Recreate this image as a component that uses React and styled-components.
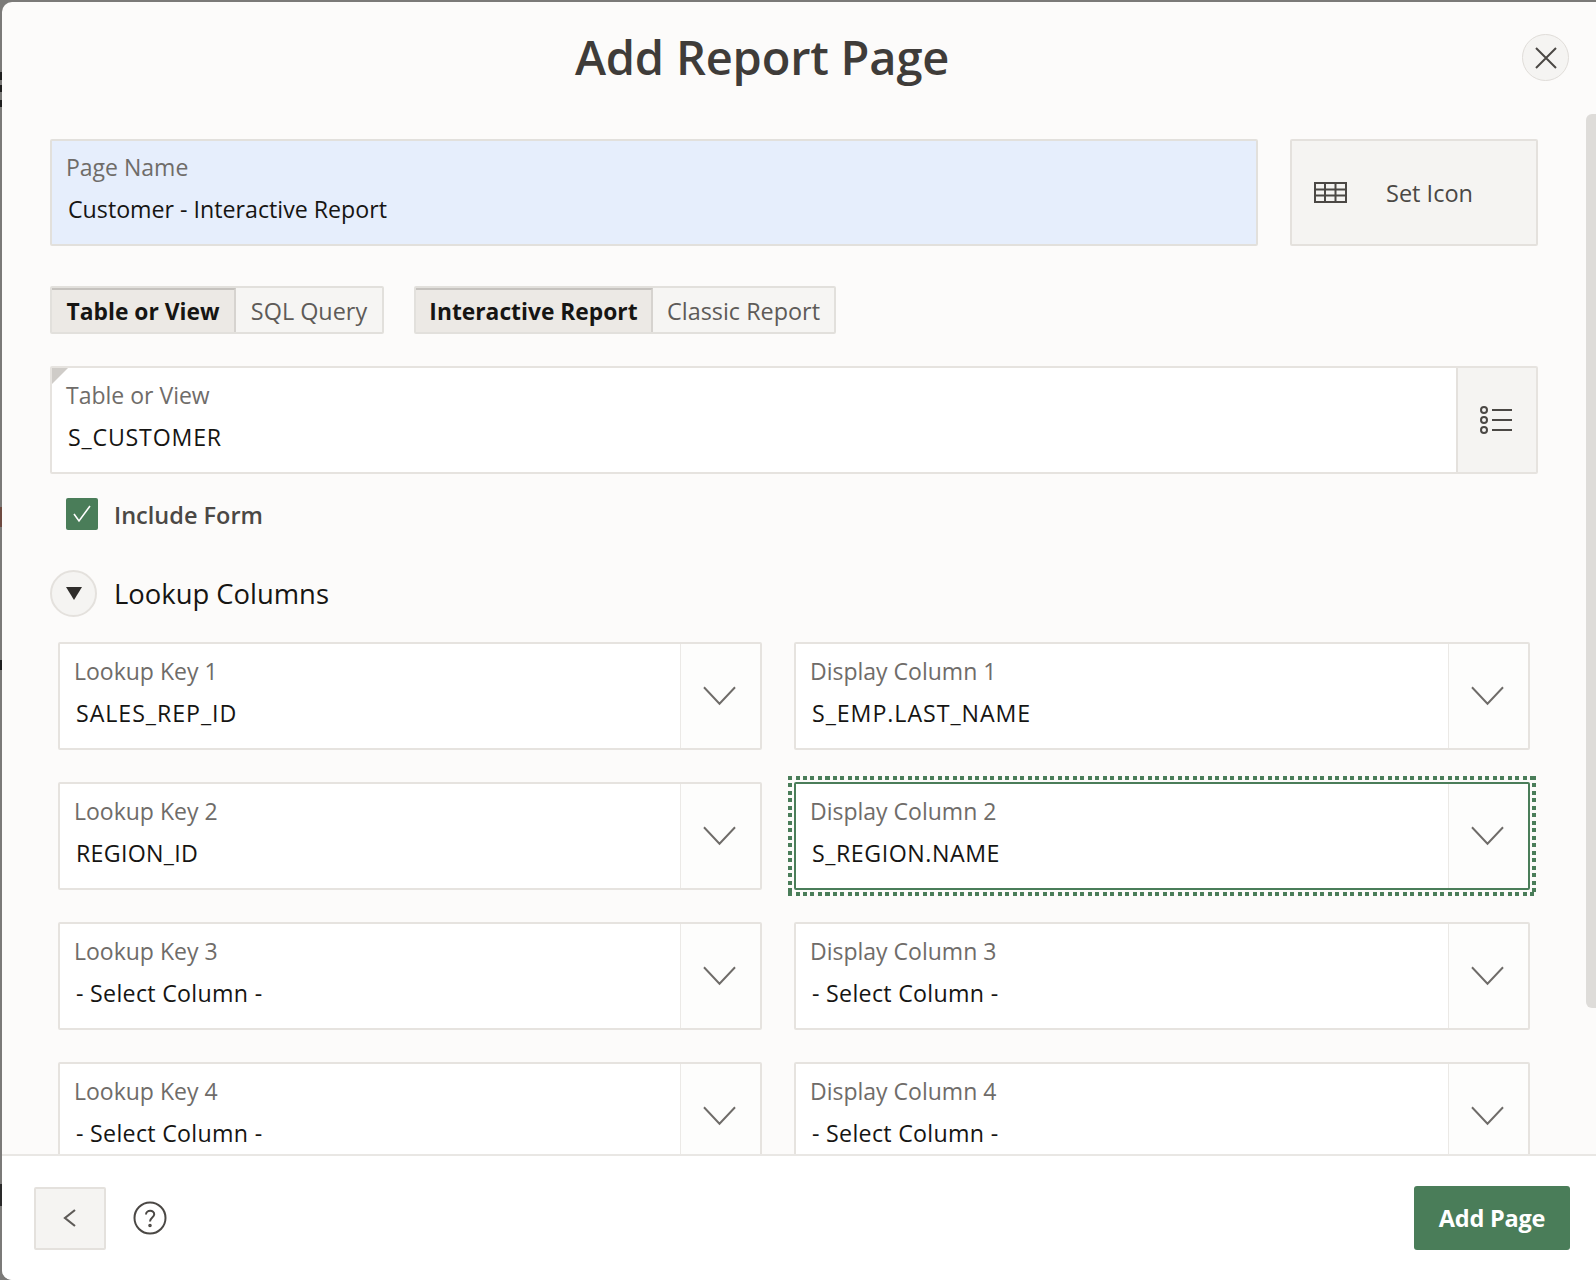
import React from 'react';
import styled, { createGlobalStyle } from 'styled-components';

const Global = createGlobalStyle`
  html, body { margin: 0; padding: 0; }
  body {
    font-family: "Open Sans", "Noto Sans", sans-serif;
    color: #161513;
    background: linear-gradient(180deg,
      #7b7a78 0 72px, #1f1f1f 72px 80px, #7b7a78 80px 85px, #1f1f1f 85px 92px, #7b7a78 92px 100px, #1f1f1f 100px 107px,
      #7b7a78 107px 507px, #6e4a40 507px 527px, #7b7a78 527px 660px, #1f1f1f 660px 670px,
      #7b7a78 670px 1184px, #2a2a2a 1184px 1206px, #7b7a78 1206px);
  }
  * { box-sizing: border-box; }
`;
const Dialog = styled.div`
  position: relative;
  margin: 2px 0 0 2px;
  height: 1278px;
  width: 1594px;
  background: #fcfbfa;
  border-radius: 10px 0 0 10px;
  overflow: hidden;
  display: flex;
  flex-direction: column;
`;
const Header = styled.header`
  height: 110px;
  flex: none;
  display: flex;
  align-items: center;
  justify-content: center;
  position: relative;
  padding-right: 74px;
`;
const Title = styled.h1`
  margin: 0;
  font-size: 47px;
  font-weight: 600;
  color: #3f3c39;
  letter-spacing: -0.2px;
`;
const CloseButton = styled.button`
  position: absolute;
  left: 1520px;
  top: 32px;
  width: 47px;
  height: 47px;
  border-radius: 50%;
  border: 1px solid #dfdcd8;
  background: #f5f4f2;
  color: #4b4845;
  display: flex;
  align-items: center;
  justify-content: center;
  padding: 0;
`;
const Scrollbar = styled.div`
  position: absolute;
  left: 1584px;
  top: 112px;
  width: 10px;
  height: 894px;
  background: #dedcd9;
  border-radius: 6px 0 0 6px;
`;
const Body = styled.main`
  flex: 1;
  overflow: hidden;
  padding: 27px 0 0 48px;
`;
const TopRow = styled.div`
  display: flex;
  gap: 32px;
  width: 1488px;
`;
const PageName = styled.div`
  flex: 1;
  height: 107px;
  background: #e6eefc;
  border: 2px solid #e2e0dc;
  border-radius: 2px;
  padding: 11px 0 0 14px;
`;
const Label = styled.div`
  font-size: 23px;
  line-height: 30px;
  color: #6f6c69;
`;
const Value = styled.div`
  font-size: 23.2px;
  line-height: 32px;
  color: #161513;
  margin: 11px 0 0 2px;
  letter-spacing: ${p => p.$ls || 0}px;
`;
const SetIcon = styled.button`
  width: 248px;
  height: 107px;
  flex: none;
  background: #f5f4f2;
  border: 2px solid #e4e1dd;
  border-radius: 2px;
  display: flex;
  align-items: center;
  padding: 0 0 0 22px;
  gap: 39px;
  font-family: inherit;
  font-size: 23.5px;
  color: #4b4845;
`;
const ToggleRow = styled.div`
  display: flex;
  gap: 30px;
  margin-top: 40px;
`;
const ToggleGroup = styled.div`
  display: flex;
  height: 48px;
  border: 2px solid #e2e0dc;
  border-radius: 2px;
  background: #f6f5f3;
`;
const Toggle = styled.div`
  width: ${p => p.$w}px;
  display: flex;
  align-items: center;
  justify-content: center;
  font-size: ${p => (p.$active ? 22.8 : 23.4)}px;
  font-weight: ${p => (p.$active ? 700 : 400)};
  color: ${p => (p.$active ? '#161513' : '#5e5b58')};
  background: ${p => (p.$active ? '#ece9e5' : 'transparent')};
  border-right: ${p => (p.$active ? '2px solid #d6d3cf' : 'none')};
  border-top: ${p => (p.$active ? '2px solid #c5c2be' : 'none')};
  padding-top: 1px;
`;
const LovField = styled.div`
  margin-top: 32px;
  width: 1488px;
  height: 108px;
  display: flex;
  background: #fff;
  border: 2px solid #e6e3df;
  border-radius: 2px;
  position: relative;
`;
const Corner = styled.span`
  position: absolute;
  left: 0;
  top: 0;
  width: 0;
  height: 0;
  border-style: solid;
  border-width: 16px 16px 0 0;
  border-color: #cfccc8 transparent transparent transparent;
`;
const FieldMain = styled.div`
  flex: 1;
  padding: 12px 0 0 14px;
`;
const LovButton = styled.div`
  width: 80px;
  background: #f5f4f2;
  border-left: 2px solid #e4e1dd;
  display: flex;
  align-items: center;
  justify-content: center;
  color: #4b4845;
  padding-right: 2px;
`;
const CheckRow = styled.div`
  display: flex;
  align-items: center;
  gap: 16px;
  margin: 23px 0 0 16px;
`;
const Check = styled.div`
  width: 32px;
  height: 32px;
  border-radius: 2px;
  background: #4a7d59;
  display: flex;
  align-items: center;
  justify-content: center;
`;
const CheckLabel = styled.span`
  font-size: 23.5px;
  font-weight: 600;
  color: #4b4845;
  padding-top: 2px;
`;
const SectionRow = styled.div`
  display: flex;
  align-items: center;
  gap: 17px;
  margin-top: 39px;
`;
const SectionToggle = styled.div`
  width: 47px;
  height: 47px;
  border-radius: 50%;
  border: 2px solid #e4e1dd;
  background: #f5f4f2;
  display: flex;
  align-items: center;
  justify-content: center;
`;
const SectionTitle = styled.h2`
  margin: 0;
  font-size: 27.4px;
  font-weight: 400;
  color: #161513;
`;
const FieldGrid = styled.div`
  display: grid;
  grid-template-columns: 704px 736px;
  column-gap: 32px;
  row-gap: 32px;
  margin: 25px 0 0 8px;
`;
const SelectField = styled.div`
  position: relative;
  height: 108px;
  display: flex;
  background: #fff;
  border: 2px solid ${p => (p.$focus ? '#4a7d59' : '#e6e3df')};
  border-radius: 2px;
`;
const FocusRing = styled.span`
  position: absolute;
  inset: -8px;
  pointer-events: none;
  background:
    repeating-linear-gradient(90deg, #4a7d59 0 4px, transparent 4px 7.5px) top / 100% 4px no-repeat,
    repeating-linear-gradient(90deg, #4a7d59 0 4px, transparent 4px 7.5px) bottom / 100% 4px no-repeat,
    repeating-linear-gradient(180deg, #4a7d59 0 4px, transparent 4px 7.5px) left / 4px 100% no-repeat,
    repeating-linear-gradient(180deg, #4a7d59 0 4px, transparent 4px 7.5px) right / 4px 100% no-repeat;
`;
const SelectMain = styled.div`
  flex: 1;
  padding: 12px 0 0 14px;
`;
const SelectArrow = styled.div`
  width: 80px;
  background: #fdfdfc;
  border-left: 1px solid #ebe9e6;
  display: flex;
  align-items: center;
  justify-content: center;
  color: #6f6c69;
  padding-right: 2px;
`;
const Footer = styled.footer`
  flex: none;
  height: 126px;
  background: #fff;
  border-top: 2px solid #e9e7e4;
  display: flex;
  align-items: center;
  padding: 0 26px 0 32px;
`;
const BackButton = styled.button`
  width: 72px;
  height: 63px;
  background: #f5f4f2;
  border: 2px solid #e4e1dd;
  border-radius: 2px;
  color: #5e5b58;
  display: flex;
  align-items: center;
  justify-content: center;
  padding: 0 3px 0 0;
`;
const HelpIcon = styled.div`
  margin-left: 27px;
  display: flex;
  color: #4b4845;
`;
const AddButton = styled.button`
  margin-left: auto;
  width: 156px;
  height: 64px;
  background: #4a7d59;
  border: none;
  border-radius: 3px;
  color: #fff;
  font-family: inherit;
  font-size: 23.5px;
  font-weight: 700;
  letter-spacing: -0.2px;
`;

const Chevron = () => (
  <svg width="33" height="22" viewBox="0 0 34 22" fill="none" stroke="currentColor" strokeWidth="2">
    <path d="M1 2 L17 19 L33 2" />
  </svg>
);

const fields = [
  ['Lookup Key 1', 'SALES_REP_ID', 0.95],
  ['Display Column 1', 'S_EMP.LAST_NAME', 0.95],
  ['Lookup Key 2', 'REGION_ID', 0.3],
  ['Display Column 2', 'S_REGION.NAME', 0.55, true],
  ['Lookup Key 3', '- Select Column -', 0.3],
  ['Display Column 3', '- Select Column -', 0.3],
  ['Lookup Key 4', '- Select Column -', 0.3],
  ['Display Column 4', '- Select Column -', 0.3],
];

export default function App() {
  return (
    <>
      <Global />
      <Dialog>
        <Header>
          <Title>Add Report Page</Title>
          <CloseButton aria-label="Close">
            <svg width="24" height="24" viewBox="0 0 24 24" fill="none" stroke="currentColor" strokeWidth="2">
              <path d="M2 2 L22 22 M22 2 L2 22" />
            </svg>
          </CloseButton>
        </Header>
        <Scrollbar />
        <Body>
          <TopRow>
            <PageName>
              <Label>Page Name</Label>
              <Value>Customer - Interactive Report</Value>
            </PageName>
            <SetIcon>
              <svg width="33" height="21" viewBox="0 0 33 21" fill="none" stroke="currentColor" strokeWidth="2">
                <rect x="1" y="1" width="31" height="19" />
                <path d="M1 7.5 H32 M1 13.5 H32 M11 1 V20 M21.5 1 V20" />
              </svg>
              <span>Set Icon</span>
            </SetIcon>
          </TopRow>
          <ToggleRow>
            <ToggleGroup>
              <Toggle $active $w={184}>Table or View</Toggle>
              <Toggle $w={146}>SQL Query</Toggle>
            </ToggleGroup>
            <ToggleGroup>
              <Toggle $active $w={237}>Interactive Report</Toggle>
              <Toggle $w={181}>Classic Report</Toggle>
            </ToggleGroup>
          </ToggleRow>
          <LovField>
            <Corner />
            <FieldMain>
              <Label>Table or View</Label>
              <Value $ls={0.8}>S_CUSTOMER</Value>
            </FieldMain>
            <LovButton>
              <svg width="33" height="28" viewBox="0 0 33 28" fill="none" stroke="currentColor" strokeWidth="2">
                <circle cx="4" cy="4" r="3" />
                <circle cx="4" cy="14" r="3" />
                <circle cx="4" cy="24" r="3" />
                <path d="M12 4 H32 M12 14 H32 M12 24 H32" />
              </svg>
            </LovButton>
          </LovField>
          <CheckRow>
            <Check>
              <svg width="20" height="20" viewBox="0 0 20 20" fill="none" stroke="#fff" strokeWidth="1.6">
                <path d="M2 10 L7 17 L18 2" />
              </svg>
            </Check>
            <CheckLabel>Include Form</CheckLabel>
          </CheckRow>
          <SectionRow>
            <SectionToggle>
              <svg width="16" height="13" viewBox="0 0 16 13"><path d="M0 0 H16 L8 13 Z" fill="#2f2d2b" /></svg>
            </SectionToggle>
            <SectionTitle>Lookup Columns</SectionTitle>
          </SectionRow>
          <FieldGrid>
            {fields.map(([label, value, ls, focus]) => (
              <SelectField key={label} $focus={focus}>
                {focus && <FocusRing />}
                <SelectMain>
                  <Label>{label}</Label>
                  <Value $ls={ls}>{value}</Value>
                </SelectMain>
                <SelectArrow><Chevron /></SelectArrow>
              </SelectField>
            ))}
          </FieldGrid>
        </Body>
        <Footer>
          <BackButton aria-label="Back">
            <svg width="14" height="20" viewBox="0 0 14 20" fill="none" stroke="currentColor" strokeWidth="2.2">
              <path d="M13 2 L3 10 L13 18" />
            </svg>
          </BackButton>
          <HelpIcon>
            <svg width="34" height="34" viewBox="0 0 34 34" fill="none" stroke="currentColor" strokeWidth="2">
              <circle cx="17" cy="17" r="15.5" />
              <path d="M13 13.5 C13 8.5 21.5 8.5 21.2 13.5 C21 16.5 17 16.5 17 20.5" />
              <circle cx="17" cy="24.5" r="0.8" />
            </svg>
          </HelpIcon>
          <AddButton>Add Page</AddButton>
        </Footer>
      </Dialog>
    </>
  );
}
